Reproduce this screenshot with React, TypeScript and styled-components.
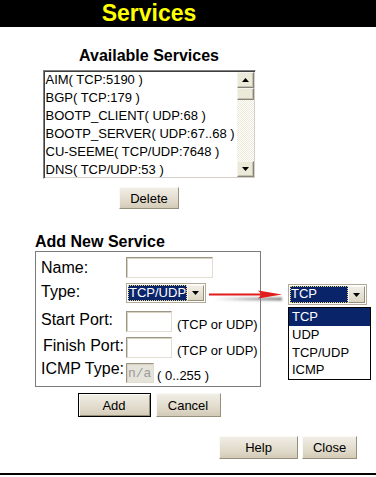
import React from 'react';
import styled, { createGlobalStyle } from 'styled-components';

const GlobalStyle = createGlobalStyle`
  html, body {
    margin: 0;
    padding: 0;
    background: #fff;
  }
  body {
    font-family: 'Liberation Sans', Arial, sans-serif;
    color: #000;
  }
`;

const Page = styled.div`
  position: relative;
  width: 376px;
  height: 477px;
  display: flex;
  flex-direction: column;
  overflow: hidden;
  background: #fff;
`;

const TitleBar = styled.div`
  height: 27px;
  flex-shrink: 0;
  background: #000;
`;

const Title = styled.h1`
  width: 298px;
  margin: 0;
  text-align: center;
  color: #ffff00;
  font-size: 23px;
  line-height: 26px;
  font-weight: bold;
`;

const Column = styled.div`
  width: 298px;
  display: flex;
  flex-direction: column;
  align-items: center;
`;

const Heading = styled.h2<{ $top: number; $left?: boolean }>`
  margin: ${p => p.$top}px 0 0 ${p => (p.$left ? 35 : 0)}px;
  align-self: ${p => (p.$left ? 'flex-start' : 'center')};
  font-size: 16px;
  line-height: 18px;
  font-weight: bold;
`;

/* ---------- list box ---------- */

const ListBox = styled.div`
  box-sizing: border-box;
  margin-top: 5px;
  width: 213px;
  height: 109px;
  display: flex;
  padding: 1px;
  border: 1px solid;
  border-color: #808080 #ffffff #ffffff #808080;
  box-shadow: inset 1px 1px 0 #404040, inset -1px -1px 0 #d4d0c8;
  background: #fff;
`;

const ListItems = styled.ul`
  flex: 1;
  margin: -1px 0 0;
  padding: 0 0 0 1px;
  list-style: none;
  overflow: hidden;
`;

const ListItem = styled.li`
  font-size: 13px;
  line-height: 18px;
  white-space: pre;
`;

const ScrollBar = styled.div`
  width: 17px;
  display: flex;
  flex-direction: column;
  background: repeating-conic-gradient(#ece9d8 0% 25%, #ffffff 0% 50%) 0 0 / 2px 2px;
`;

const ScrollPart = styled.div<{ $h: number }>`
  box-sizing: border-box;
  height: ${p => p.$h}px;
  display: flex;
  align-items: center;
  justify-content: center;
  background: #ece9d8;
  border: 1px solid;
  border-color: #f4f3ee #85837a #85837a #f4f3ee;
  box-shadow: inset -1px -1px 0 #c5c2b2;
`;

const Track = styled.div`
  flex: 1;
`;

const Tri = ({ up }: { up?: boolean }) => (
  <svg width="7" height="4" viewBox="0 0 7 4">
    <polygon points={up ? '0,4 3.5,0 7,4' : '0,0 7,0 3.5,4'} fill="#000" />
  </svg>
);

/* ---------- buttons ---------- */

const Btn = styled.button<{ $w: number; $h: number; $default?: boolean }>`
  box-sizing: border-box;
  width: ${p => p.$w}px;
  height: ${p => p.$h}px;
  padding: 0;
  font-family: 'Liberation Sans', Arial, sans-serif;
  font-size: 13px;
  color: #000;
  background: linear-gradient(#f1eee6, #ddd6c5 75%, #d2cab6);
  border: 1px solid;
  border-color: ${p => (p.$default ? '#000' : '#faf9f5 #968f7c #968f7c #faf9f5')};
  box-shadow: ${p => (p.$default ? 'inset 1px 1px 0 #faf9f5, inset -1px -1px 0 #968f7c' : 'none')};
`;

const ButtonRow = styled.div<{ $top: number }>`
  display: flex;
  gap: 5px;
  margin-top: ${p => p.$top}px;
`;

const FooterRow = styled.div`
  display: flex;
  gap: 4px;
  margin-top: 19px;
  padding-left: 219px;
`;

const BottomRule = styled.div`
  margin-top: 14px;
  height: 2px;
  background: #000;
`;

/* ---------- form ---------- */

const FormBox = styled.div`
  box-sizing: border-box;
  align-self: flex-start;
  margin-left: 35px;
  width: 226px;
  padding: 1px 0 1px 5px;
  border: 1px solid #7b7b7b;
`;

const FieldRow = styled.div<{ $h: number }>`
  display: flex;
  align-items: flex-start;
  height: ${p => p.$h}px;
`;

const FieldLabel = styled.div<{ $top: number; $indent?: number }>`
  box-sizing: border-box;
  width: 85px;
  flex-shrink: 0;
  margin-top: ${p => p.$top}px;
  padding-left: ${p => p.$indent || 0}px;
  font-size: 16px;
  line-height: 18px;
  white-space: pre;
`;

const FieldControl = styled.div`
  display: flex;
  align-items: flex-end;
  margin-top: 4px;
`;

const TextInput = styled.input<{ $w: number; $h: number }>`
  box-sizing: border-box;
  width: ${p => p.$w}px;
  height: ${p => p.$h}px;
  margin: 0;
  padding: 0 1px;
  border: 1px solid;
  border-color: #9c9686 #e2ddd0 #e2ddd0 #9c9686;
  box-shadow: inset 1px 1px 0 #d8d2c2;
  background: #fff;
  font-family: 'Liberation Mono', monospace;
  font-size: 13px;
  color: #9a9a9a;

  &:disabled {
    background: #e6e3da;
  }
`;

const Hint = styled.span<{ $gap: number }>`
  margin-left: ${p => p.$gap}px;
  font-size: 13px;
  line-height: 15px;
  white-space: pre;
`;

/* ---------- select ---------- */

const SelectFrame = styled.div<{ $w: number; $h: number }>`
  box-sizing: border-box;
  width: ${p => p.$w}px;
  height: ${p => p.$h}px;
  display: flex;
  padding: 1px;
  border: 1px solid #b2ab97;
  background: #fff;
`;

const SelectValue = styled.div`
  flex: 1;
  overflow: hidden;
  padding-left: 1px;
  background: #0a246a;
  color: #fff;
  font-size: 13px;
  line-height: 16px;
  white-space: pre;
  outline: 1px dotted #e6d27a;
  outline-offset: -1px;
`;

const SelectButton = styled.div`
  box-sizing: border-box;
  width: 17px;
  display: flex;
  align-items: center;
  justify-content: center;
  background: linear-gradient(#f1eee6, #ddd6c5);
  border: 1px solid;
  border-color: #faf9f5 #968f7c #968f7c #faf9f5;
`;

const Select = ({ w, h, value }: { w: number; h: number; value: string }) => (
  <SelectFrame $w={w} $h={h}>
    <SelectValue>{value}</SelectValue>
    <SelectButton>
      <Tri />
    </SelectButton>
  </SelectFrame>
);

/* ---------- callout (open dropdown illustration) ---------- */

const Callout = styled.div`
  position: absolute;
  left: 208px;
  top: 283px;
  display: flex;
  align-items: flex-start;
`;

const DropColumn = styled.div`
  margin-top: 1px;
  display: flex;
  flex-direction: column;
`;

const DropList = styled.ul`
  box-sizing: border-box;
  width: 83px;
  height: 73px;
  margin: 2px 0 0;
  padding: 0;
  list-style: none;
  border: 1px solid #000;
  background: #fff;
`;

const DropItem = styled.li<{ $active?: boolean }>`
  padding-left: 3px;
  height: 17.75px;
  font-size: 13px;
  line-height: 18px;
  background: ${p => (p.$active ? '#0a246a' : 'transparent')};
  color: ${p => (p.$active ? '#fff' : '#000')};
`;

const services = [
  'AIM( TCP:5190 )',
  'BGP( TCP:179 )',
  'BOOTP_CLIENT( UDP:68 )',
  'BOOTP_SERVER( UDP:67..68 )',
  'CU-SEEME( TCP/UDP:7648 )',
  'DNS( TCP/UDP:53 )',
];

const types = ['TCP', 'UDP', 'TCP/UDP', 'ICMP'];

const App: React.FC = () => {
  return (
    <Page>
      <GlobalStyle />
      <TitleBar>
        <Title>Services</Title>
      </TitleBar>

      <Column>
        <Heading $top={20}>Available Services</Heading>
        <ListBox>
          <ListItems>
            {services.map(s => (
              <ListItem key={s}>{s}</ListItem>
            ))}
          </ListItems>
          <ScrollBar>
            <ScrollPart $h={16}>
              <Tri up />
            </ScrollPart>
            <ScrollPart $h={12} />
            <Track />
            <ScrollPart $h={16}>
              <Tri />
            </ScrollPart>
          </ScrollBar>
        </ListBox>
        <ButtonRow $top={8}>
          <Btn $w={60} $h={22}>Delete</Btn>
        </ButtonRow>

        <Heading $top={24} $left>
          Add New Service
        </Heading>
        <FormBox>
          <FieldRow $h={26}>
            <FieldLabel $top={6}>Name:</FieldLabel>
            <FieldControl>
              <TextInput $w={87} $h={21} />
            </FieldControl>
          </FieldRow>
          <FieldRow $h={28}>
            <FieldLabel $top={4}>Type:</FieldLabel>
            <FieldControl>
              <Select w={80} h={20} value="TCP/UDP" />
            </FieldControl>
          </FieldRow>
          <FieldRow $h={26}>
            <FieldLabel $top={4}>Start Port:</FieldLabel>
            <FieldControl>
              <TextInput $w={46} $h={21} />
              <Hint $gap={5}>(TCP or UDP)</Hint>
            </FieldControl>
          </FieldRow>
          <FieldRow $h={26}>
            <FieldLabel $top={4} $indent={2}>Finish Port:</FieldLabel>
            <FieldControl>
              <TextInput $w={46} $h={21} />
              <Hint $gap={5}>(TCP or UDP)</Hint>
            </FieldControl>
          </FieldRow>
          <FieldRow $h={26}>
            <FieldLabel $top={1}>ICMP Type:</FieldLabel>
            <FieldControl>
              <TextInput $w={28} $h={20} disabled defaultValue="n/a" />
              <Hint $gap={3}>( 0..255 )</Hint>
            </FieldControl>
          </FieldRow>
        </FormBox>

        <ButtonRow $top={6}>
          <Btn $w={73} $h={24} $default>
            Add
          </Btn>
          <Btn $w={65} $h={24}>
            Cancel
          </Btn>
        </ButtonRow>
      </Column>

      <FooterRow>
        <Btn $w={79} $h={23}>Help</Btn>
        <Btn $w={55} $h={23}>Close</Btn>
      </FooterRow>
      <BottomRule />

      <Callout>
        <svg width="80" height="22" viewBox="0 0 80 22">
          <defs>
            <linearGradient id="shade" x1="0" x2="1" y1="0" y2="0">
              <stop offset="0" stopColor="#9a9a9a" stopOpacity="0" />
              <stop offset="0.5" stopColor="#8a8a8a" stopOpacity="0.6" />
              <stop offset="1" stopColor="#6e6e6e" stopOpacity="0.9" />
            </linearGradient>
            <filter id="soft" x="-0.1" y="-1" width="1.2" height="3">
              <feGaussianBlur stdDeviation="1.2" />
            </filter>
          </defs>
          <rect x="6" y="14.5" width="68" height="3" fill="url(#shade)" filter="url(#soft)" />
          <line x1="1" y1="11.5" x2="56" y2="11.5" stroke="#e21b1b" strokeWidth="2" />
          <polygon points="50,7.5 74,11.5 50,15.5 54,11.5" fill="#e21b1b" />
        </svg>
        <DropColumn>
          <Select w={79} h={21} value="TCP" />
          <DropList>
            {types.map((t, i) => (
              <DropItem key={t} $active={i === 0}>
                {t}
              </DropItem>
            ))}
          </DropList>
        </DropColumn>
      </Callout>
    </Page>
  );
};

export default App;
